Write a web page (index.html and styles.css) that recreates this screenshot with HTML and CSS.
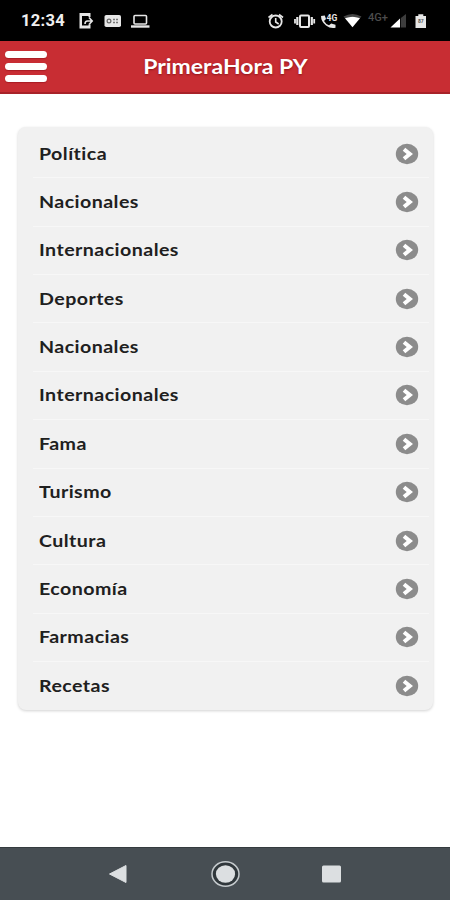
FILE: index.html
```
<!DOCTYPE html>
<html lang="es">
<head>
<meta charset="utf-8">
<title>PrimeraHora PY</title>
<link rel="stylesheet" href="styles.css">
</head>
<body>
<div class="status">
  <span class="clock">12:34</span>
  <svg class="status-left" width="74" height="20" viewBox="77 11 74 20">
    <path fill="#e6e6e6" fill-rule="evenodd" d="M79.500 13h11v4h-2v-1h-6.500v9.500h6.500v-1h2V28.500h-11z"/>
    <path d="M89 17.500l3.200 3.500-3.200 3.500M92 21h-4.500q-2.500 0-2.500 3" fill="none" stroke="#e6e6e6" stroke-width="1.600"/>
    <rect x="104.500" y="15" width="16.500" height="12" rx="1.800" fill="#e6e6e6"/>
    <circle cx="109" cy="21" r="1.900" fill="none" stroke="#666" stroke-width="1.200"/>
    <path d="M113 19.500h5M113 22.500h5" stroke="#777" stroke-width="1.500" stroke-dasharray="2 1"/>
    <rect x="134" y="15.500" width="12.500" height="8.500" rx="1" fill="none" stroke="#e6e6e6" stroke-width="1.600"/>
    <path d="M131 26.500h18.500" stroke="#e6e6e6" stroke-width="2.400"/>
  </svg>
  <svg class="status-right" width="168" height="22" viewBox="265 10 168 22">
    <g fill="none" stroke="#e6e6e6">
      <circle cx="275.700" cy="21.500" r="6" stroke-width="1.800"/>
      <path d="M275.700 18v4l3 2M268.500 17.500l4-3M283 17.500l-4-3" stroke-width="1.600"/>
      <rect x="300" y="15.500" width="9" height="11.500" rx="1" stroke-width="2"/>
      <path d="M297.300 17v8M311.800 17v8" stroke-width="2.200"/>
      <path d="M295 19v4.500M314.200 19v4.500" stroke-width="1.800"/>
    </g>
    <path fill="#e6e6e6" d="M321 16l3.800-.5 1.200 3.500-2 2q1.600 3 5 4.300l2.200-1.700 4.300 1.200v3q-5 1.200-9.500-2.300-5-4-5-9.500z"/>
    <text x="326.500" y="21" class="call-net">4G</text>
    <path d="M343.500 16.500q9-5 18 0l-2 2.200q-7-3.700-14 0z" fill="#444"/>
    <path d="M345 18.300q7.500-3 15 0L352.500 27.300z" fill="#fff"/>
    <text x="368" y="21" class="net" textLength="20" lengthAdjust="spacingAndGlyphs">4G+</text>
    <path d="M390.500 27.500L400 18.500v9z" fill="#fff"/>
    <path d="M400.800 18L406 14v13.500h-5.200z" fill="#3d3d3d"/>
    <path d="M415.500 16h2.800v-1.800h5V16h2.700v12h-10.500z" fill="#e6e6e6"/>
    <text x="418" y="23" class="charge">87</text>
  </svg>
</div>
<header class="bar">
  <div class="menu"><i></i><i></i><i></i></div>
  <h1 class="title"><span>PrimeraHora PY</span></h1>
</header>
<svg class="defs" width="0" height="0">
  <symbol id="go" viewBox="0 0 24 22">
    <ellipse cx="12" cy="11" rx="11.200" ry="10.200" fill="#8c8c8c"/>
    <path d="M9 6.300L14.800 11 9 15.700" fill="none" stroke="#fff" stroke-width="4"/>
  </symbol>
</svg>
<main class="content">
  <ul class="list">
    <li><span>Política</span><svg><use href="#go"/></svg></li>
    <li><span>Nacionales</span><svg><use href="#go"/></svg></li>
    <li><span>Internacionales</span><svg><use href="#go"/></svg></li>
    <li><span>Deportes</span><svg><use href="#go"/></svg></li>
    <li><span>Nacionales</span><svg><use href="#go"/></svg></li>
    <li><span>Internacionales</span><svg><use href="#go"/></svg></li>
    <li><span>Fama</span><svg><use href="#go"/></svg></li>
    <li><span>Turismo</span><svg><use href="#go"/></svg></li>
    <li><span>Cultura</span><svg><use href="#go"/></svg></li>
    <li><span>Economía</span><svg><use href="#go"/></svg></li>
    <li><span>Farmacias</span><svg><use href="#go"/></svg></li>
    <li><span>Recetas</span><svg><use href="#go"/></svg></li>
  </ul>
</main>
<nav class="nav">
  <svg width="450" height="52" viewBox="0 848 450 52">
    <path d="M109.500 874L126 865.500v17z" fill="#dcdfe1" stroke="#dcdfe1" stroke-linejoin="round"/>
    <ellipse cx="225.500" cy="874" rx="13.500" ry="12.200" fill="#30373b" stroke="#c5cacd" stroke-width="1.500"/>
    <ellipse cx="225.500" cy="874" rx="9.600" ry="8.700" fill="#dcdfe1"/>
    <rect x="322" y="865.500" width="19" height="17" rx="1.500" fill="#dcdfe1"/>
  </svg>
</nav>
</body>
</html>
```
FILE: styles.css
```
* { box-sizing: border-box; }
body {
  margin: 0;
  height: 900px;
  display: flex;
  flex-direction: column;
  background: #fff;
  font-family: Lato, sans-serif;
  overflow: hidden;
}
.status {
  height: 41px;
  background: #000;
  display: flex;
  align-items: center;
  padding: 0 17px 0 21px;
}
.clock {
  width: 56px;
  color: #efefef;
  font: 700 16.5px/20px Roboto, sans-serif;
  letter-spacing: 0.3px;
  white-space: nowrap;
  padding-top: 1px;
}
.status svg { display: block; flex: none; }
.status-right { margin-left: auto; }
.call-net { font: 700 8.5px Roboto, sans-serif; fill: #e6e6e6; }
.net { font: 500 10.5px Roboto, sans-serif; fill: #4c4c4c; }
.charge { font: 700 5px Roboto, sans-serif; fill: #555; }
.bar {
  height: 53px;
  background: #c82d33;
  border-bottom: 2px solid #a82329;
  display: grid;
  grid-template-columns: 52px 1fr 52px;
  align-items: center;
}
.menu {
  display: flex;
  flex-direction: column;
  gap: 5px;
  padding-left: 5px;
}
.menu i {
  width: 42px;
  height: 7px;
  border-radius: 4px;
  background: #fff;
  box-shadow: 0 1px 1px #a91d24;
}
.title {
  margin: 0;
  padding-bottom: 2px;
  color: #fff;
  font-size: 20.5px;
  line-height: 24px;
  font-weight: 700;
  letter-spacing: 0;
  text-align: center;
  text-shadow: 0 1px 2px #8c1519;
}
.title span { display: inline-block; transform: scaleX(1.12); }
.defs { display: block; flex: none; }
.content { flex: 1; padding: 33px 17px 0 18px; }
.list {
  margin: 0;
  padding: 3px 0 0;
  list-style: none;
  background: #f1f1f1;
  border-radius: 8px;
  box-shadow: 0 1px 3px rgba(0, 0, 0, 0.18);
}
.list li {
  height: 48.36px;
  display: flex;
  align-items: center;
  justify-content: space-between;
  margin: 0 4px 0 15px;
  padding: 0 10px 0 6px;
  border-bottom: 1px solid #f7f7f7;
}
.list li:last-child { border-bottom-color: transparent; }
.list span {
  color: #202020;
  font-size: 17.5px;
  font-weight: 700;
  line-height: 22px;
  letter-spacing: 0.4px;
  transform: scaleX(1.12);
  transform-origin: left;
}
.list svg { width: 24px; height: 22px; }
.nav {
  height: 53px;
  background: #474e53;
  border-top: 1px solid #343b3f;
}
.nav svg { display: block; }
```
